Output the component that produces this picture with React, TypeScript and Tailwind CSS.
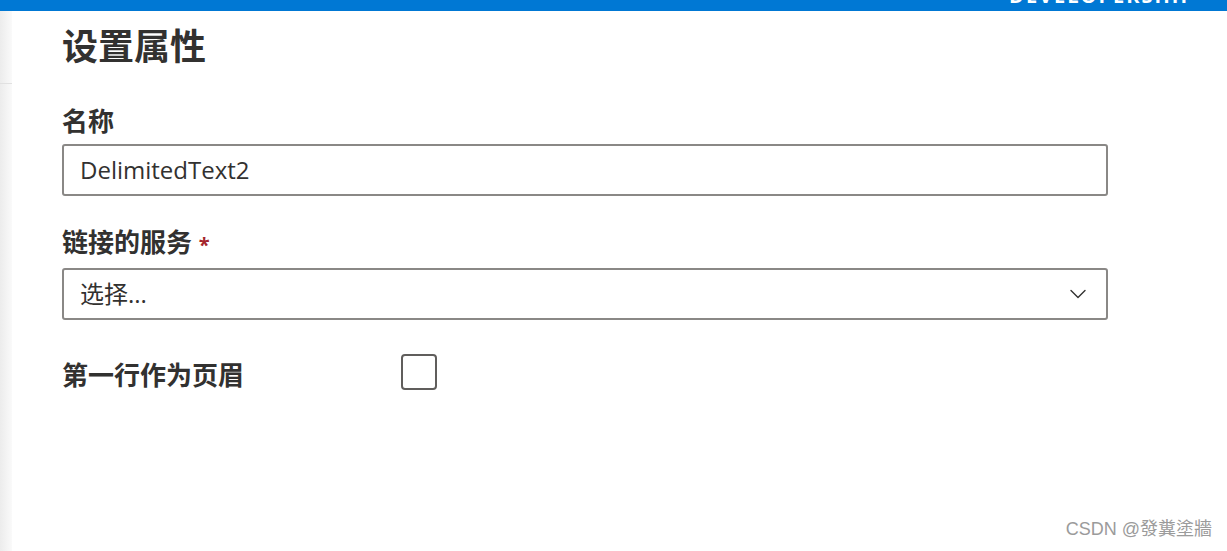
import { ChevronDown } from 'lucide-react'

const cjk = '[font-family:"Open_Sans","Noto_Sans_CJK_SC",sans-serif]'

export default function App() {
    return (
        <div className={`relative h-[551px] w-full overflow-hidden bg-white text-[#323130] ${cjk}`}>
            <div className="flex h-[11px] items-end justify-end overflow-hidden bg-[#0078d4] pr-[32px]">
                <span className="mb-[5px] text-[20px] font-bold leading-none tracking-[2px] text-white">DEVELOPERSHIP</span>
            </div>

            <div className="flex h-[540px]">
                <div className="w-[12px] shrink-0 bg-gradient-to-r from-[#ececec] to-[#fafafa]">
                    <div className="h-[73px] border-b border-[#e1e1e1]" />
                </div>

                <div className="flex-1 pl-[50px] pt-[12px]">
                    <h1 className="text-[36px] font-bold leading-[48px]">设置属性</h1>

                    <div className="mt-[33px] w-[1046px]">
                        <label className="block text-[26px] font-bold leading-[34px]">名称</label>
                        <div className="mt-[6px] flex h-[52px] items-center rounded-[3px] border-2 border-[#8a8886] px-[16px] text-[24px]">
                            DelimitedText2
                        </div>
                    </div>

                    <div className="mt-[29px] w-[1046px]">
                        <label className="block text-[26px] font-bold leading-[34px]">
                            链接的服务 <span className="text-[20px] font-bold text-[#a4262c]">*</span>
                        </label>
                        <div className="mt-[6px] flex h-[52px] items-center justify-between rounded-[3px] border-2 border-[#8a8886] pl-[16px] pr-[14px] text-[24px]">
                            <span>选择...</span>
                            <ChevronDown className="size-[28px] text-[#323130]" strokeWidth={1.2} />
                        </div>
                    </div>

                    <div className="mt-[34px] flex items-start">
                        <span className="w-[339px] pt-[3px] text-[26px] font-bold leading-[36px]">第一行作为页眉</span>
                        <div className="size-[36px] rounded-[4px] border-2 border-[#605e5c]" />
                    </div>
                </div>
            </div>

            <div className="absolute bottom-[8px] right-[15px] text-[18px] text-[#9b9b9b] [font-family:'Liberation_Sans','Noto_Sans_CJK_TC',sans-serif]">
                CSDN @發糞塗牆
            </div>
        </div>
    )
}
